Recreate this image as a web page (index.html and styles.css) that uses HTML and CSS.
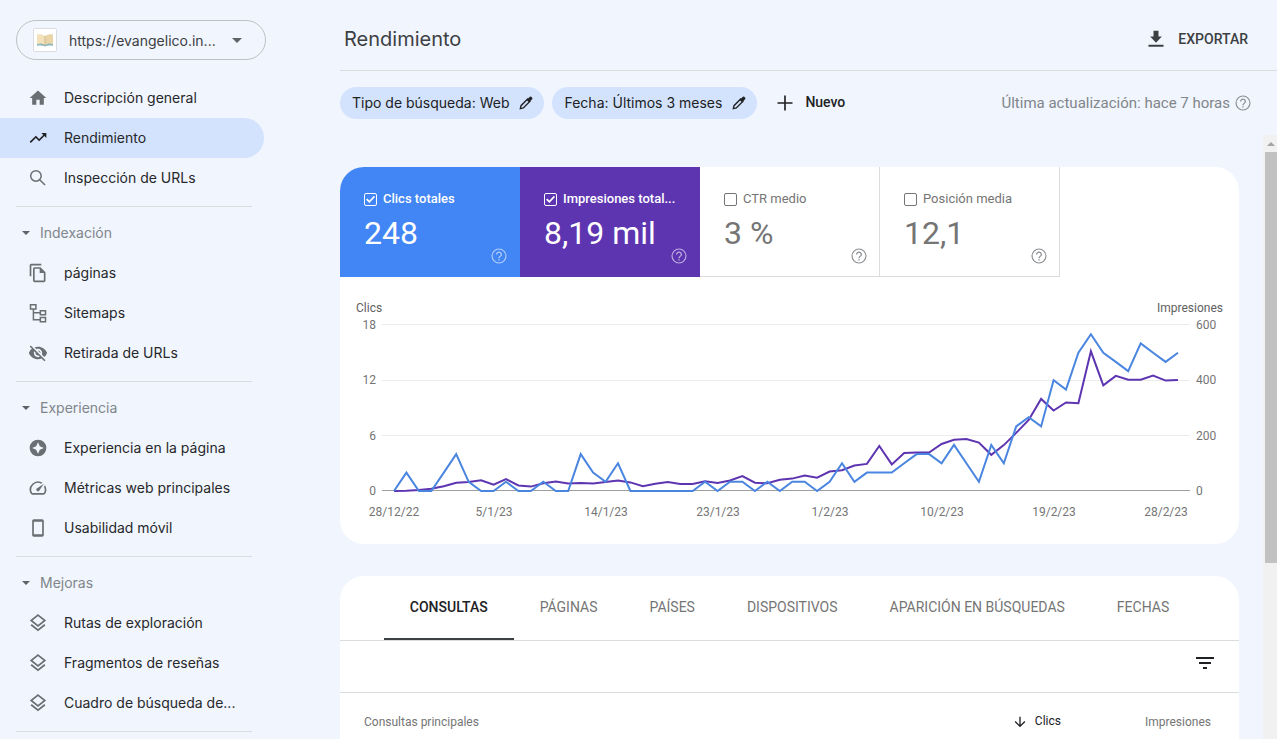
FILE: index.html
```html
<!DOCTYPE html>
<html lang="es">
<head>
    <meta charset="UTF-8">
    <meta name="viewport" content="width=device-width, initial-scale=1.0">
    <title>Rendimiento</title>
    <link rel="stylesheet" href="styles.css">
</head>
<body>
    <svg class="sprite" aria-hidden="true">
        <symbol id="icon-help" viewBox="0 0 24 24">
            <circle cx="12" cy="12" r="9.3" fill="none" stroke="currentColor" stroke-width="1.5"/>
            <path d="M11.1 18h1.8v-1.8h-1.8V18zM12 6c-2.21 0-4 1.79-4 4h1.7c0-1.3 1-2.4 2.3-2.4s2.3 1 2.3 2.3c0 2.1-3.2 2.1-3.2 5.1h1.8c0-2.25 3.1-2.5 3.1-5 0-2.21-1.79-4-4-4z"/>
        </symbol>
        <symbol id="icon-edit" viewBox="0 0 24 24">
            <path d="m3.500 20.500 1-4.500L14.500 6l3.500 3.500-10 10z" fill="none" stroke="currentColor" stroke-width="2"/>
            <path d="M21.200 6.200a1.500 1.500 0 0 0 0-2.100l-1.300-1.300a1.500 1.500 0 0 0-2.100 0L13 7.500 16.500 11z"/>
        </symbol>
        <symbol id="icon-layers" viewBox="0 0 24 24">
            <path d="M12 2.6 20.2 9 12 15.4 3.8 9z" fill="none" stroke="currentColor" stroke-width="2"/>
            <path d="M3.8 14.2 12 20.6l8.2-6.4" fill="none" stroke="currentColor" stroke-width="2.2"/>
        </symbol>
    </svg>

    <aside class="sidebar">
        <button class="property" type="button">
            <span class="property-logo">
                <svg viewBox="0 0 18 14">
                    <path d="M1 10.5c3-1 6-.5 8 1 2-1.500 5-2 8-1V13c-3-.8-6-.5-8 .5-2-1-5-1.300-8-.5z" fill="#8fb9bb"/>
                    <path d="M1 1.500C4 1 7 1.500 9 3.200v8.600C7 10.300 4 10 1 11z" fill="#f3e1b9"/>
                    <path d="M17 1.500C14 1 11 1.500 9 3.200v8.600c2-1.500 5-1.800 8-.8z" fill="#ead5a8"/>
                    <path d="M9 3v8.800" stroke="#c9b182" stroke-width=".8"/>
                </svg>
            </span>
            <span class="property-name">https://evangelico.in...</span>
            <span class="caret"></span>
        </button>

        <nav class="menu">
            <a class="item" href="#">
                <svg viewBox="0 0 24 24"><path d="M10 20v-6h4v6h5v-8h3L12 3 2 12h3v8z"/></svg>
                <span>Descripción general</span>
            </a>
            <a class="item active" href="#">
                <svg viewBox="0 0 24 24"><path d="m16 6 2.290 2.290-4.880 4.880-4-4L2 16.590 3.410 18l6-6 4 4 6.300-6.290L22 12V6z"/></svg>
                <span>Rendimiento</span>
            </a>
            <a class="item" href="#">
                <svg class="outline" viewBox="0 0 24 24"><circle cx="9.500" cy="9.500" r="6.300"/><path d="m14 14 6.500 6.500"/></svg>
                <span>Inspección de URLs</span>
            </a>

            <div class="group">
                <button class="group-title" type="button"><span class="caret"></span><span>Indexación</span></button>
                <a class="item" href="#">
                    <svg viewBox="0 0 24 24"><path d="M16 1H4c-1.100 0-2 .9-2 2v13h2V3h12V1zm-1 4H8c-1.100 0-1.990.9-1.990 2L6 21c0 1.100.89 2 1.990 2H19c1.100 0 2-.9 2-2V11l-6-6zM8 21V7h6v5h5v9H8z"/></svg>
                    <span>páginas</span>
                </a>
                <a class="item" href="#">
                    <svg class="outline" viewBox="0 0 24 24"><path d="M3 2h6.500v5.200H3zM14.800 9.200H21v5h-6.200zM14.800 17.500H21v5h-6.200zM6.500 7.200V20h8.300M6.500 11.700h8.300"/></svg>
                    <span>Sitemaps</span>
                </a>
                <a class="item" href="#">
                    <svg viewBox="0 0 24 24"><path d="M12 7c2.760 0 5 2.240 5 5 0 .65-.13 1.260-.36 1.830l2.920 2.920c1.510-1.260 2.700-2.890 3.430-4.750-1.730-4.390-6-7.500-11-7.500-1.400 0-2.740.25-3.980.7l2.160 2.160C10.740 7.130 11.350 7 12 7zM2 4.270l2.280 2.280.46.46C3.080 8.300 1.780 10.020 1 12c1.730 4.390 6 7.500 11 7.500 1.550 0 3.030-.3 4.380-.84l.42.42L19.730 22 21 20.730 3.270 3 2 4.270zM7.530 9.800l1.550 1.550c-.05.21-.08.43-.08.65 0 1.660 1.340 3 3 3 .22 0 .44-.03.65-.08l1.550 1.550c-.67.33-1.410.53-2.200.53-2.760 0-5-2.240-5-5 0-.79.2-1.530.53-2.200zm4.310-.78 3.150 3.150.02-.16c0-1.660-1.340-3-3-3l-.17.01z"/></svg>
                    <span>Retirada de URLs</span>
                </a>
            </div>

            <div class="group">
                <button class="group-title" type="button"><span class="caret"></span><span>Experiencia</span></button>
                <a class="item" href="#">
                    <svg viewBox="0 0 24 24"><path fill-rule="evenodd" d="M12 2a10 10 0 1 0 0 20 10 10 0 0 0 0-20zm0 3 2.200 4.800L19 12l-4.800 2.200L12 19l-2.200-4.800L5 12l4.800-2.200z"/></svg>
                    <span>Experiencia en la página</span>
                </a>
                <a class="item" href="#">
                    <svg viewBox="0 0 24 24"><path d="m20.380 8.570-1.230 1.850a8 8 0 0 1-.22 7.580H5.070A8 8 0 0 1 15.580 6.850l1.850-1.230A10 10 0 0 0 3.350 19a2 2 0 0 0 1.720 1h13.850a2 2 0 0 0 1.740-1 10 10 0 0 0-.27-10.440zm-9.790 6.840a2 2 0 0 0 2.830 0l5.660-8.490-8.490 5.660a2 2 0 0 0 0 2.830z"/></svg>
                    <span>Métricas web principales</span>
                </a>
                <a class="item" href="#">
                    <svg viewBox="0 0 24 24"><path d="M17 1.500H7c-1.100 0-2 .9-2 2v17c0 1.100.9 2 2 2h10c1.100 0 2-.9 2-2v-17c0-1.100-.9-2-2-2zM17 19.500H7v-15h10v15z"/></svg>
                    <span>Usabilidad móvil</span>
                </a>
            </div>

            <div class="group">
                <button class="group-title" type="button"><span class="caret"></span><span>Mejoras</span></button>
                <a class="item" href="#">
                    <svg><use href="#icon-layers"/></svg>
                    <span>Rutas de exploración</span>
                </a>
                <a class="item" href="#">
                    <svg><use href="#icon-layers"/></svg>
                    <span>Fragmentos de reseñas</span>
                </a>
                <a class="item" href="#">
                    <svg><use href="#icon-layers"/></svg>
                    <span>Cuadro de búsqueda de...</span>
                </a>
            </div>
            <div class="group"></div>
        </nav>
    </aside>

    <main class="main">
        <header class="header">
            <h1>Rendimiento</h1>
            <button class="export" type="button">
                <svg viewBox="0 0 24 24"><path d="M19 9h-4V2H9v7H5l7 7.500zM3 19v2.300h18V19z"/></svg>
                EXPORTAR
            </button>
        </header>

        <div class="filters">
            <button class="chip" type="button"><span>Tipo de búsqueda: Web</span><svg><use href="#icon-edit"/></svg></button>
            <button class="chip" type="button"><span>Fecha: Últimos 3 meses</span><svg><use href="#icon-edit"/></svg></button>
            <button class="new" type="button">
                <svg viewBox="0 0 24 24"><path d="M3 11h8V3h2v8h8v2h-8v8h-2v-8H3z"/></svg>
                <span>Nuevo</span>
            </button>
            <span class="updated">Última actualización: hace 7 horas <svg class="help"><use href="#icon-help"/></svg></span>
        </div>

        <div class="scroll">
            <div class="content">
                <section class="card">
                    <div class="metrics">
                        <div class="metric clicks">
                            <label><input type="checkbox" checked><span>Clics totales</span></label>
                            <strong>248</strong>
                            <svg class="help"><use href="#icon-help"/></svg>
                        </div>
                        <div class="metric impressions">
                            <label><input type="checkbox" checked><span>Impresiones total...</span></label>
                            <strong>8,19 mil</strong>
                            <svg class="help"><use href="#icon-help"/></svg>
                        </div>
                        <div class="metric">
                            <label><input type="checkbox"><span>CTR medio</span></label>
                            <strong>3 %</strong>
                            <svg class="help"><use href="#icon-help"/></svg>
                        </div>
                        <div class="metric">
                            <label><input type="checkbox"><span>Posición media</span></label>
                            <strong>12,1</strong>
                            <svg class="help"><use href="#icon-help"/></svg>
                        </div>
                    </div>

                    <svg class="chart" id="chart" viewBox="0 0 899 267">
                        <g class="grid">
                            <path d="M42 47.500h808M42 103.500h808M42 158.500h808"/>
                            <path class="base" d="M42 213.500h808"/>
                        </g>
                        <g class="axis-title">
                            <text x="16" y="35">Clics</text>
                            <text x="883" y="35" text-anchor="end">Impresiones</text>
                        </g>
                        <g text-anchor="end">
                            <text x="36" y="52">18</text>
                            <text x="36" y="107">12</text>
                            <text x="36" y="163">6</text>
                            <text x="36" y="218">0</text>
                        </g>
                        <g>
                            <text x="856" y="52">600</text>
                            <text x="856" y="107">400</text>
                            <text x="856" y="163">200</text>
                            <text x="856" y="218">0</text>
                        </g>
                        <g text-anchor="middle">
                            <text x="54" y="239">28/12/22</text>
                            <text x="154" y="239">5/1/23</text>
                            <text x="266" y="239">14/1/23</text>
                            <text x="378" y="239">23/1/23</text>
                            <text x="490" y="239">1/2/23</text>
                            <text x="602" y="239">10/2/23</text>
                            <text x="714" y="239">19/2/23</text>
                            <text x="826" y="239">28/2/23</text>
                        </g>
                        <polyline class="line-impressions" id="line-impressions"/>
                        <polyline class="line-clicks" id="line-clicks"/>
                    </svg>
                </section>

                <section class="card">
                    <div class="tabs">
                        <button class="tab selected" type="button">CONSULTAS</button>
                        <button class="tab" type="button">PÁGINAS</button>
                        <button class="tab" type="button">PAÍSES</button>
                        <button class="tab" type="button">DISPOSITIVOS</button>
                        <button class="tab" type="button">APARICIÓN EN BÚSQUEDAS</button>
                        <button class="tab" type="button">FECHAS</button>
                    </div>
                    <div class="toolbar">
                        <button class="filter" type="button" aria-label="Filtrar">
                            <svg viewBox="0 0 24 24"><path d="M10 18h4v-2h-4v2zM3 6v2h18V6H3zm3 7h12v-2H6v2z"/></svg>
                        </button>
                    </div>
                    <table class="queries">
                        <thead>
                            <tr>
                                <th>Consultas principales</th>
                                <th class="number sorted">
                                    <svg viewBox="0 0 24 24"><path d="m20 12-1.410-1.410L13 16.170V4h-2v12.170l-5.580-5.590L4 12l8 8z"/></svg>
                                    Clics
                                </th>
                                <th class="number">Impresiones</th>
                            </tr>
                        </thead>
                    </table>
                </section>
            </div>
            <div class="scrollbar"><span class="scroll-up"></span><span class="thumb"></span></div>
        </div>
    </main>

    <script>
        const clicks = [
            0, 2, 0, 0, 2, 4, 1, 0, 0, 1, 0, 0, 1, 0, 0, 4, 2, 1, 3, 0, 0, 0,
            0, 0, 0, 1, 0, 1, 1, 0, 1, 0, 1, 1, 0, 1, 3, 1, 2, 2, 2, 3, 4, 4,
            3, 5, 3, 1, 5, 3, 7, 8, 7, 12, 11, 15, 17, 15, 14, 13, 16, 15, 14, 15
        ];
        const impressions = [
            0, 1, 4, 8, 17, 30, 33, 39, 23, 43, 20, 16, 28, 34, 27, 29, 27, 33, 38, 31, 17, 26,
            32, 25, 25, 35, 29, 38, 54, 30, 28, 41, 45, 56, 48, 70, 75, 92, 98, 163, 96, 137, 139, 139,
            170, 185, 188, 175, 131, 166, 210, 257, 333, 291, 320, 317, 505, 382, 416, 402, 402, 417, 399, 401
        ];

        function drawLine(id, values, max) {
            const step = 784 / (values.length - 1);
            const points = values.map((v, i) => `${(54 + i * step).toFixed(1)},${(214 - v / max * 166).toFixed(1)}`);
            document.getElementById(id).setAttribute('points', points.join(' '));
        }

        drawLine('line-impressions', impressions, 600);
        drawLine('line-clicks', clicks, 18);
    </script>
</body>
</html>
```
FILE: styles.css
```css
* {
    box-sizing: border-box;
}

body {
    display: flex;
    height: 100vh;
    margin: 0;
    overflow: hidden;
    background: #f1f5fd;
    color: #202124;
    font-family: Roboto, Arial, sans-serif;
    font-size: 14px;
}

button {
    padding: 0;
    border: none;
    background: none;
    color: inherit;
    font: inherit;
    cursor: pointer;
}

svg {
    flex: none;
    fill: currentColor;
}

.outline {
    fill: none;
    stroke: currentColor;
    stroke-width: 1.8;
}

.sprite {
    position: absolute;
    width: 0;
    height: 0;
}

.help {
    width: 18px;
    height: 18px;
    color: #8b8e92;
}

.caret {
    flex: none;
    border: 5px solid transparent;
    border-top-color: #5f6368;
    border-bottom: none;
}

/* Sidebar */
.sidebar {
    flex: none;
    width: 268px;
    padding-top: 20px;
    overflow: hidden;
    font-family: Inter, sans-serif;
}

.property {
    display: flex;
    align-items: center;
    width: 250px;
    height: 40px;
    margin: 0 0 18px 16px;
    padding: 0 23px 0 16px;
    border: 1px solid #bdc1c6;
    border-radius: 20px;
    color: #3c4043;
}

.property-logo {
    display: flex;
    align-items: center;
    justify-content: center;
    width: 24px;
    height: 24px;
    border: 1px solid #dadce0;
    border-radius: 2px;
    background: #fff;
}

.property-logo svg {
    width: 18px;
    height: 14px;
}

.property-name {
    flex: 1;
    margin-left: 12px;
    text-align: left;
    white-space: nowrap;
}

.item {
    display: flex;
    align-items: center;
    gap: 16px;
    width: 264px;
    height: 40px;
    padding-left: 28px;
    border-radius: 0 20px 20px 0;
    color: #27282b;
    text-decoration: none;
    white-space: nowrap;
}

.item span,
.group-title span:last-child,
.chip span,
.new span {
    padding-bottom: 2px;
}

.item svg {
    width: 20px;
    height: 20px;
    color: #6b6e72;
}

.item.active {
    background: #d3e3fd;
}

.item.active svg {
    color: #202124;
}

.group {
    margin-top: 8px;
}

.group::before {
    content: "";
    display: block;
    width: 236px;
    height: 1px;
    margin: 0 0 6px 16px;
    background: #dadce0;
}

.group-title {
    display: flex;
    align-items: center;
    gap: 10px;
    height: 40px;
    padding-left: 22px;
    color: #80868b;
}

.group-title .caret {
    border-width: 4px 4px 0;
}

/* Header */
.main {
    display: flex;
    flex: 1;
    flex-direction: column;
    min-width: 0;
    padding-left: 72px;
}

.header {
    display: flex;
    flex: none;
    align-items: center;
    justify-content: space-between;
    height: 71px;
    padding: 7px 29px 0 4px;
    border-bottom: 1px solid #dadce0;
    color: #3c4043;
}

h1 {
    margin: 0;
    font-family: Inter, sans-serif;
    font-size: 20px;
    font-weight: 400;
}

.export {
    display: flex;
    align-items: center;
    gap: 12px;
    font-weight: 500;
}

.export svg {
    width: 20px;
    height: 20px;
}

.filters {
    display: flex;
    flex: none;
    align-items: center;
    gap: 8px;
    height: 64px;
    padding-right: 25px;
    white-space: nowrap;
}

.chip {
    display: flex;
    align-items: center;
    gap: 9px;
    height: 32px;
    padding: 0 10px 0 12px;
    border-radius: 16px;
    background: #d3e3fd;
    font-family: Inter, sans-serif;
}

.chip svg {
    width: 16px;
    height: 16px;
}

.new {
    display: flex;
    align-items: center;
    gap: 10px;
    margin-left: 10px;
    font-weight: 500;
}

.new svg {
    width: 20px;
    height: 20px;
}

.updated {
    display: flex;
    align-items: center;
    gap: 4px;
    margin-left: auto;
    color: #80868b;
    font-size: 15px;
}

/* Scrolling area */
.scroll {
    display: flex;
    flex: 1;
    min-height: 0;
}

.content {
    flex: 1;
    min-width: 0;
    padding: 32px 24px 0 0;
}

.scrollbar {
    display: flex;
    flex-direction: column;
    align-items: center;
    width: 14px;
    padding-left: 2px;
    background: #f1f1f1;
}

.scroll-up {
    margin: 7px 0 6px;
    border: 4px solid transparent;
    border-top: none;
    border-bottom-color: #a3a3a3;
}

.thumb {
    width: 100%;
    height: 68%;
    background: #c1c1c1;
}

.card {
    margin-bottom: 32px;
    overflow: hidden;
    border-radius: 24px;
    background: #fff;
}

/* Metrics */
.metrics {
    display: flex;
}

.metric {
    display: grid;
    grid-template-columns: 1fr 18px;
    align-content: start;
    width: 180px;
    height: 110px;
    padding: 24px 11px 0 24px;
    border: solid #dadce0;
    border-width: 0 1px 1px 0;
    color: #757575;
}

.metric label {
    display: flex;
    grid-column: 1 / 3;
    align-items: center;
    gap: 6px;
    height: 16px;
    font-size: 13px;
    white-space: nowrap;
}

.metric label span {
    padding-bottom: 1px;
}

.metric input {
    display: grid;
    flex: none;
    width: 13px;
    height: 13px;
    margin: 0;
    border: 1px solid currentColor;
    border-radius: 2px;
    color: inherit;
    appearance: none;
}

.metric input:checked::before {
    content: "";
    margin: 1px;
    background: currentColor;
    clip-path: polygon(14% 44%, 38% 68%, 88% 14%, 100% 28%, 38% 94%, 0 58%);
}

.metric strong {
    margin-top: 6px;
    font-size: 32px;
    font-weight: 400;
    line-height: 40px;
    white-space: nowrap;
}

.metric .help {
    align-self: end;
    margin-bottom: -12px;
}

.metric.clicks,
.metric.impressions {
    color: #fff;
}

.metric.clicks label,
.metric.impressions label {
    font-weight: 500;
}

.metric.clicks {
    border-color: #4285f4;
    background: #4285f4;
}

.metric.impressions {
    border-color: #5e35b1;
    background: #5e35b1;
}

.metric.clicks .help,
.metric.impressions .help {
    color: rgba(255, 255, 255, 0.6);
}

/* Chart */
.chart {
    display: block;
    width: 100%;
    fill: #757575;
    font-size: 12px;
}

.axis-title {
    fill: #616161;
}

.grid {
    stroke: #ebebeb;
}

.grid .base {
    stroke: #9e9e9e;
}

.line-clicks,
.line-impressions {
    fill: none;
    stroke: #4a86e0;
    stroke-width: 2;
}

.line-impressions {
    stroke: #5e35b1;
}

/* Table card */
.tabs {
    display: flex;
    justify-content: center;
    height: 65px;
    border-bottom: 1px solid #dadce0;
}

.tab {
    padding: 0 26px;
    border-bottom: 2px solid transparent;
    color: #757575;
    white-space: nowrap;
}

.tab.selected {
    border-color: #3c4043;
    color: #202124;
    font-weight: 500;
}

.toolbar {
    display: flex;
    justify-content: flex-end;
    height: 52px;
    padding: 10px 22px 0;
    border-bottom: 1px solid #dadce0;
}

.filter {
    height: 24px;
}

.filter svg {
    display: block;
    width: 24px;
    height: 24px;
}

.queries {
    width: 100%;
    margin-bottom: 40px;
    border-collapse: collapse;
    color: #757575;
    font-size: 12px;
}

.queries th {
    height: 58px;
    padding: 0 0 0 24px;
    font-weight: 400;
    text-align: left;
}

.queries .number {
    width: 150px;
    padding: 0 28px 0 0;
    text-align: right;
}

.queries .sorted {
    color: #202124;
}

.queries svg {
    width: 16px;
    height: 16px;
    margin-right: 4px;
    vertical-align: middle;
}
```
